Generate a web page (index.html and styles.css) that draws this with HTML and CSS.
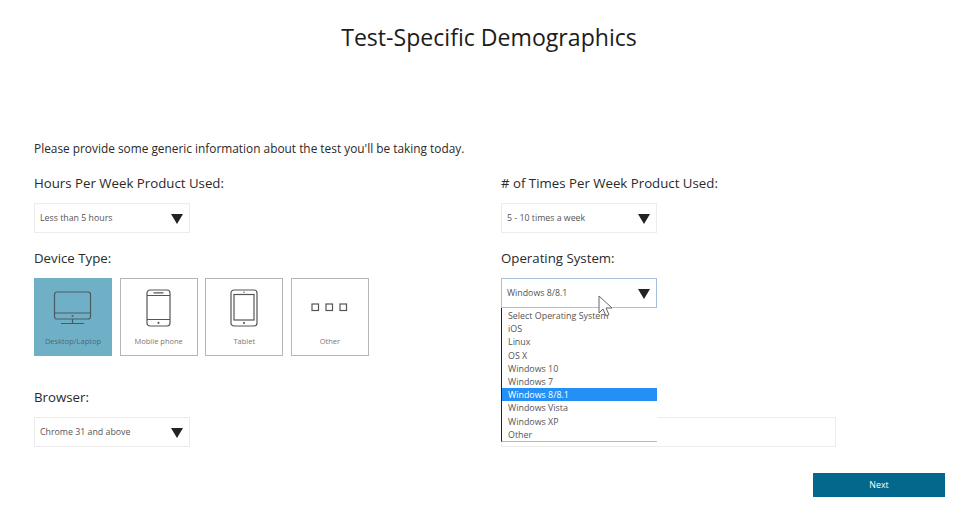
FILE: index.html
```html
<!DOCTYPE html>
<html lang="en">
<head>
<meta charset="utf-8">
<title>Test-Specific Demographics</title>
<link rel="stylesheet" href="styles.css">
</head>
<body>
<main class="page">
  <h1 class="title">Test-Specific Demographics</h1>
  <p class="intro">Please provide some generic information about the test you'll be taking today.</p>
  <div class="columns">
    <section class="col">
      <h2 class="label">Hours Per Week Product Used:</h2>
      <div class="select"><span>Less than 5 hours</span><i class="arrow"></i></div>
      <h2 class="label label-next">Device Type:</h2>
      <div class="tiles">
        <div class="tile tile-active">
          <svg class="icon" width="40" height="38" viewBox="0 0 40 38" fill="none" stroke="#4a5a64" stroke-width="1.2"><rect x="1.5" y="3" width="36" height="27" rx="2.5"/><path d="M1.500 24h36M19.500 30v4.500M8 34.500h23"/><circle cx="19.500" cy="27" r="1" fill="#4a5a64" stroke="none"/></svg>
          <span class="tile-text">Desktop/Laptop</span>
        </div>
        <div class="tile">
          <svg class="icon" width="26" height="38" viewBox="0 0 26 38" fill="none" stroke="#555" stroke-width="1.2"><rect x="1" y="1" width="23" height="36" rx="3"/><path d="M1 6.500h23M1 30.500h23M7.500 3.800h10"/><circle cx="12.500" cy="33.800" r="1.100" fill="#555" stroke="none"/></svg>
          <span class="tile-text">Mobile phone</span>
        </div>
        <div class="tile">
          <svg class="icon" width="28" height="38" viewBox="0 0 28 38" fill="none" stroke="#555" stroke-width="1.2"><rect x="1" y="1" width="26" height="36" rx="3"/><rect x="4" y="5.500" width="20" height="25.500"/><circle cx="14" cy="3.300" r=".7" fill="#555" stroke="none"/><circle cx="14" cy="34" r="1.100" fill="#555" stroke="none"/></svg>
          <span class="tile-text">Tablet</span>
        </div>
        <div class="tile">
          <svg class="icon" width="37" height="38" viewBox="0 0 37 38" fill="none" stroke="#555" stroke-width="1.200"><rect x="1" y="15" width="6.500" height="6.500"/><rect x="15" y="15" width="6.500" height="6.500"/><rect x="29" y="15" width="6.500" height="6.500"/></svg>
          <span class="tile-text">Other</span>
        </div>
      </div>
      <h2 class="label label-browser">Browser:</h2>
      <div class="select"><span>Chrome 31 and above</span><i class="arrow"></i></div>
    </section>
    <section class="col">
      <h2 class="label">
        # of Times Per Week Product Used:</h2>
      <div class="select"><span>5 - 10 times a week</span><i class="arrow"></i></div>
      <h2 class="label label-next">Operating System:</h2>
      <div class="select-wrap">
        <div class="select select-open"><span>Windows 8/8.1</span><i class="arrow"></i></div>
        <ul class="menu">
          <li>Select Operating System</li>
          <li>iOS</li>
          <li>Linux</li>
          <li>OS X</li>
          <li>Windows 10</li>
          <li>Windows 7</li>
          <li class="menu-selected">Windows 8/8.1</li>
          <li>Windows Vista</li>
          <li>Windows XP</li>
          <li>Other</li>
        </ul>
        <svg class="cursor" width="16" height="24" viewBox="0 0 16 24"><path d="M1 1v17l4-4 3 7 3-1.300-3-6.700h6z" fill="#fff" fill-opacity=".85" stroke="#666" stroke-width="1"/></svg>
      </div>
      <div class="field"></div>
    </section>
  </div>
  <div class="actions"><button class="next" type="button">Next</button></div>
</main>
</body>
</html>
```
FILE: styles.css
```css
* { box-sizing: border-box; }
html, body { margin: 0; background: #fff; }
body { font-family: "Open Sans", "Noto Sans", sans-serif; color: #222; overflow: hidden; }
.page { width: 960px; height: 526px; padding: 21px 15px 0 34px; }
.title { margin: 0 0 0 -1px; font-size: 23.100px; line-height: 32px; font-weight: 400; text-align: center; color: #1c1c1c; }
.intro { margin: 85px 0 0; font-size: 11.870px; line-height: 20px; color: #2a2a2a; }
.columns { display: grid; grid-template-columns: 467px 1fr; margin-top: 15px; }
.col { min-width: 0; }
.label { margin: 0; font-size: 13.250px; line-height: 20px; font-weight: 400; color: #2a2a2a; }
.label-next { margin-top: 15px; }
.label-browser { margin-top: 31px; }
.select { display: flex; align-items: center; justify-content: space-between; width: 156px; height: 30px; margin-top: 10px; padding: 0 6px 0 5px; border: 1px solid #ececec; font-size: 8.800px; color: #555; }
.arrow { width: 0; height: 0; margin-top: 1px; border-left: 6.500px solid transparent; border-right: 6.500px solid transparent; border-top: 10px solid #222; }
.tiles { display: flex; gap: 7.670px; margin-top: 10px; }
.tile { display: flex; flex-direction: column; align-items: center; width: 78px; height: 78px; padding-top: 10px; border: 1px solid #b5b5b5; }
.tile-active { background: #6fb0c7; border-color: #6fb0c7; }
.icon { display: block; height: 38px; }
.tile-text { margin-top: 8px; font-size: 7.500px; line-height: 12px; color: #777; }
.tile-active .tile-text { color: #4d6a78; }
.select-wrap { position: relative; margin-top: 10px; }
.select-wrap .select { margin-top: 0; }
.select-open { border-color: #a9c0da; }
.menu { position: absolute; top: 30px; left: 0; z-index: 2; width: 156px; height: 134px; margin: 0; padding: 1px 0 0; list-style: none; background: #fff; border-left: 1px solid #222; border-bottom: 1px solid #a9bdd0; font-size: 8.900px; line-height: 13.200px; color: #555; }
.menu li { padding-left: 6px; white-space: nowrap; }
.menu .menu-selected { background: #2490f5; color: #fff; }
.cursor { position: absolute; top: 17px; left: 97px; z-index: 3; }
.field { width: 335px; height: 30px; margin-top: 109px; border: 1px solid #ececec; }
.actions { display: flex; justify-content: flex-end; margin-top: 26px; }
.next { width: 132px; height: 24px; padding: 0; border: 0; background: #04688c; color: #fff; font: 400 8.800px "Open Sans", sans-serif; }
```
